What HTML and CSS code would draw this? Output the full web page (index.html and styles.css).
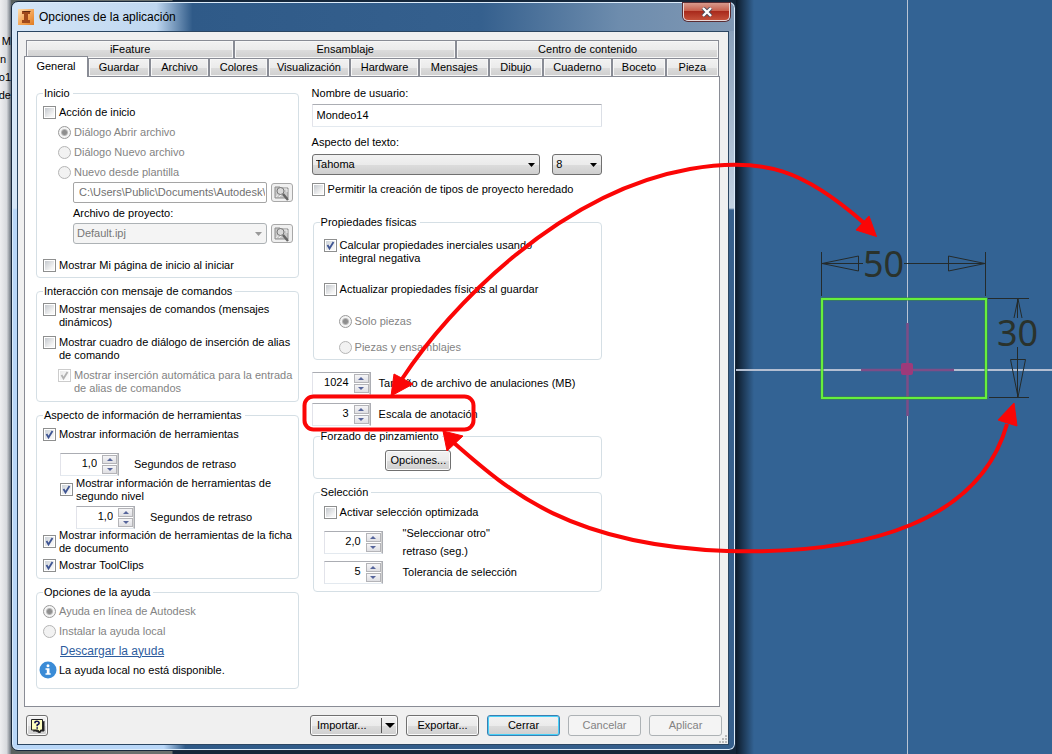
FILE: index.html
```html
<!DOCTYPE html>
<html lang="es">
<head>
<meta charset="utf-8">
<title>Opciones de la aplicación</title>
<link rel="stylesheet" href="styles.css">
</head>
<body>
<svg class="symbols" width="0" height="0" aria-hidden="true">
  <symbol id="browse" viewBox="0 0 16 16">
    <path d="M1 2h5l1 1h7v10H1z" fill="#c9c9c9" stroke="#8d8d8d"/>
    <path d="M2 12l5-6M5 12l4-4M9 4h4v3" stroke="#eee" fill="none"/>
    <circle cx="6.500" cy="6" r="3.500" fill="#d9d9d9" stroke="#777"/>
    <path d="M9 9l5 6" stroke="#666" stroke-width="2.500"/>
  </symbol>
</svg>
<div class="desktop">
  <aside class="behind"><span>M</span><span class="start">n</span><span>to1</span><span>de</span></aside>
  <main class="dialog">
    <header class="titlebar">
      <svg class="logo" viewBox="0 0 16 16" aria-hidden="true"><defs><linearGradient id="lg" x1="0" y1="0" x2="1" y2="1"><stop offset="0" stop-color="#ffe0b0"/><stop offset=".5" stop-color="#f5a95c"/><stop offset="1" stop-color="#e07c22"/></linearGradient></defs><rect width="16" height="16" fill="url(#lg)"/><path d="M4 2h8v3h-2v6h2v3H4v-3h2V5H4z" fill="#a04a1c"/><path d="M4 2h8l1 1H6z" fill="#5e2a12"/></svg>
      <h1>Opciones de la aplicación</h1>
      <button class="close" aria-label="Cerrar ventana"><svg viewBox="0 0 12 10"><path d="M2 1l8 8M10 1L2 9" stroke="#4b4b5a" stroke-width="4"/><path d="M2 1l8 8M10 1L2 9" stroke="#fff" stroke-width="2.400"/></svg></button>
    </header>
    <div class="client">
      <nav class="tabs top"><button class="t-a">iFeature</button><button class="t-b">Ensamblaje</button><button class="t-c">Centro de contenido</button></nav>
      <nav class="tabs low">
        <button class="active">General</button><button class="n1">Guardar</button><button class="n2">Archivo</button><button class="n2">Colores</button><button class="n3">Visualización</button><button class="n4">Hardware</button><button class="n4">Mensajes</button><button class="n5">Dibujo</button><button class="n4">Cuaderno</button><button class="n5">Boceto</button><button class="n5">Pieza</button>
      </nav>
      <section class="panel">
        <div class="col left">
          <fieldset class="g-start"><legend>Inicio</legend>
            <label class="row"><input type="checkbox">Acción de inicio</label>
            <label class="row in1 off"><input type="radio" name="s" checked disabled>Diálogo Abrir archivo</label>
            <label class="row in1 off"><input type="radio" name="s" disabled>Diálogo Nuevo archivo</label>
            <label class="row in1 off"><input type="radio" name="s" disabled>Nuevo desde plantilla</label>
            <div class="pick"><input type="text" class="path" aria-label="Plantilla" disabled value="C:\Users\Public\Documents\Autodesk\I"><button class="browse" aria-label="Buscar plantilla"><svg><use href="#browse"/></svg></button></div>
            <label class="row in2" for="proj">Archivo de proyecto:</label>
            <div class="pick"><select id="proj" disabled><option>Default.ipj</option></select><button class="browse" aria-label="Buscar proyecto"><svg><use href="#browse"/></svg></button></div>
            <label class="row home"><input type="checkbox">Mostrar Mi página de inicio al iniciar</label>
          </fieldset>
          <fieldset class="g-cmd"><legend>Interacción con mensaje de comandos</legend>
            <label class="two"><input type="checkbox"><span>Mostrar mensajes de comandos (mensajes<br>dinámicos)</span></label>
            <label class="two"><input type="checkbox"><span>Mostrar cuadro de diálogo de inserción de alias<br>de comando</span></label>
            <label class="two in1 off"><input type="checkbox" checked disabled><span>Mostrar inserción automática para la entrada<br>de alias de comandos</span></label>
          </fieldset>
          <fieldset class="g-tip"><legend>Aspecto de información de herramientas</legend>
            <label class="row"><input type="checkbox" checked>Mostrar información de herramientas</label>
            <div class="num n-a"><span class="spin"><input id="d1" type="text" value="1,0"><span class="arrows"><button aria-label="Más"></button><button class="dn" aria-label="Menos"></button></span></span><label for="d1">Segundos de retraso</label></div>
            <label class="two mid in3"><input type="checkbox" checked><span>Mostrar información de herramientas de<br>segundo nivel</span></label>
            <div class="num n-b"><span class="spin"><input id="d2" type="text" value="1,0"><span class="arrows"><button aria-label="Más"></button><button class="dn" aria-label="Menos"></button></span></span><label for="d2">Segundos de retraso</label></div>
            <label class="two mid"><input type="checkbox" checked><span>Mostrar información de herramientas de la ficha<br>de documento</span></label>
            <label class="row"><input type="checkbox" checked>Mostrar ToolClips</label>
          </fieldset>
          <fieldset class="g-help"><legend>Opciones de la ayuda</legend>
            <label class="row off"><input type="radio" name="h" checked disabled>Ayuda en línea de Autodesk</label>
            <label class="row off"><input type="radio" name="h" disabled>Instalar la ayuda local</label>
            <div class="row in3"><a href="#">Descargar la ayuda</a></div>
            <p class="info"><svg viewBox="0 0 18 18" aria-hidden="true"><circle cx="9" cy="9" r="8.500" fill="#3a8bd6"/><path d="M9 3.200a1.500 1.500 0 1 1 0 3 1.500 1.500 0 0 1 0-3M6.500 7.300h4v5h1.200v1.500H6.500v-1.500h1.300V8.800H6.500z" fill="#fff"/></svg>La ayuda local no está disponible.</p>
          </fieldset>
        </div>
        <div class="col right">
          <label class="row" for="user">Nombre de usuario:</label>
          <input id="user" class="user" type="text" value="Mondeo14">
          <label class="row look" for="font">Aspecto del texto:</label>
          <div class="fonts"><select id="font"><option>Tahoma</option></select><select class="size" aria-label="Tamaño"><option>8</option></select></div>
          <label class="row legacy"><input type="checkbox">Permitir la creación de tipos de proyecto heredado</label>
          <fieldset class="g-phys"><legend>Propiedades físicas</legend>
            <label class="two"><input type="checkbox" checked><span>Calcular propiedades inerciales usando<br>integral negativa</span></label>
            <label class="row upd"><input type="checkbox">Actualizar propiedades físicas al guardar</label>
            <label class="row in1 off solo"><input type="radio" name="p" checked disabled>Solo piezas</label>
            <label class="row in1 off both"><input type="radio" name="p" disabled>Piezas y ensamblajes</label>
          </fieldset>
          <div class="num n-c"><span class="spin"><input id="mb" type="text" value="1024"><span class="arrows"><button aria-label="Más"></button><button class="dn" aria-label="Menos"></button></span></span><label for="mb">Tamaño de archivo de anulaciones (MB)</label></div>
          <div class="num n-d"><span class="spin"><input id="sc" type="text" value="3"><span class="arrows"><button aria-label="Más"></button><button class="dn" aria-label="Menos"></button></span></span><label for="sc">Escala de anotación</label></div>
          <fieldset class="g-pin"><legend>Forzado de pinzamiento</legend><button class="btn opt">Opciones...</button></fieldset>
          <fieldset class="g-sel"><legend>Selección</legend>
            <label class="row"><input type="checkbox">Activar selección optimizada</label>
            <div class="num n-e tall"><span class="spin"><input id="so" type="text" value="2,0"><span class="arrows"><button aria-label="Más"></button><button class="dn" aria-label="Menos"></button></span></span><label for="so">"Seleccionar otro"<br>retraso (seg.)</label></div>
            <div class="num n-e"><span class="spin"><input id="tol" type="text" value="5"><span class="arrows"><button aria-label="Más"></button><button class="dn" aria-label="Menos"></button></span></span><label for="tol">Tolerancia de selección</label></div>
          </fieldset>
        </div>
      </section>
      <footer class="actions">
        <button class="btn help" aria-label="Ayuda"><svg viewBox="0 0 15 15"><path d="M3 13h3l4 2v-2h4V3" stroke="#222" fill="#222"/><path d="M1.500 1.500h11v10.500h-2v2l-3-2h-6z" fill="#ffffc0" stroke="#222"/><path d="M5 5.200V4.500Q5 3.200 7 3.200T9.200 5Q9.200 6 7.200 7V8.300M7.200 9.300v1.500" stroke="#101050" stroke-width="1.600" fill="none"/></svg></button>
        <button class="btn import"><span>Importar...</span><i></i></button>
        <button class="btn">Exportar...</button>
        <button class="btn primary">Cerrar</button>
        <button class="btn" disabled>Cancelar</button>
        <button class="btn" disabled>Aplicar</button>
        <svg class="grip" viewBox="0 0 8 8" aria-hidden="true"><path d="M6 0h2v2H6zM3 3h2v2H3zM6 3h2v2H6zM0 6h2v2H0zM3 6h2v2H3zM6 6h2v2H6z" fill="#bbb"/></svg>
      </footer>
    </div>
  </main>
  <section class="sketch" aria-label="Boceto">
    <svg viewBox="736 0 316 754" preserveAspectRatio="none">
      <path d="M907.500 0V754" stroke="#b9c4d4"/><path d="M736 370H1052" stroke="#b4bfd2" stroke-width="2"/>
      <path d="M907.500 323V416M861 370H954" stroke="#7d4d87" stroke-width="2.500"/>
      <rect x="822" y="299" width="164" height="99" fill="none" stroke="#3c8c3c" stroke-width="3"/>
      <rect x="822" y="299" width="164" height="99" fill="none" stroke="#66f03c" stroke-width="2"/>
      <rect x="901" y="363" width="12" height="12" rx="2" fill="#9e3a7a"/>
      <path d="M821.500 252V296M985.500 252V296M822 263.500H863M904 263.500H985M822 263.500L858.500 256V271ZM985 263.500L948.500 256V271ZM988 298.500H1029M989 397.500H1029M1017.500 299V318M1017.500 347V397M1018 299L1014 318M1018 299L1022 318M1018 397L1010.500 359.500H1025.500Z" fill="none" stroke="#242b2c"/>
      <text x="883.500" y="277">50</text><text x="1017.500" y="346">30</text>
    </svg>
  </section>
  <svg class="marks" viewBox="0 0 1052 754" preserveAspectRatio="none" aria-hidden="true">
    <rect x="304.500" y="396.500" width="169" height="33" rx="9"/>
    <path d="M402 379C450 306 560 192 690 169C765 156 805 171 864 223"/>
    <path d="M454 443C510 492 570 545 727 551C870 555 980 520 1007 424"/>
    <path class="tip" d="M391 396L394 374L413 384ZM876.500 236.500L856 230L869 216ZM443 431L463 436L447 451ZM1014 403L998 420L1017 426Z"/>
  </svg>
</div>
</body>
</html>
```
FILE: styles.css
```css
* { box-sizing: border-box; }
body { margin: 0; font: 11px/13px Tahoma, "Liberation Sans", sans-serif; color: #000; background: #336394; }
button, input, select { font: inherit; color: inherit; margin: 0; padding: 0; border-radius: 0; }
.symbols { position: absolute; }
.desktop { position: relative; display: grid; grid-template-columns: 11px minmax(0, 725fr) minmax(0, 316fr); min-height: 100vh; padding: 1px 0 3px; background: linear-gradient(90deg, #58605e 0, #6a706e 120px, #6a706e 172px, #14263a 173px, #14263a 738px, #336394 750px); }
.behind { background: linear-gradient(90deg, #eeeef0, #d8dade 60%, #6b737c); display: flex; flex-direction: column; align-items: flex-end; gap: 5px; padding-top: 35px; margin: -1px 0 -3px; overflow: hidden; white-space: nowrap; }
.start { align-self: flex-start; }
.dialog { display: flex; flex-direction: column; border: 1px solid #17283c; border-radius: 7px; box-shadow: inset 0 0 0 1px #dcecfb; padding: 1px 6px 5px 5px; z-index: 1; background: linear-gradient(#d5e6f7, #d5e6f7 206px, transparent 208px) left / 6px 100% no-repeat, linear-gradient(#8098b4, #c3d2e2 206px, transparent 208px) right / 6px 100% no-repeat, linear-gradient(90deg, #b9d7f8 0, #b9d7f8 21%, #2f5a88 24%, #365f8c 100%); }
.titlebar { display: flex; align-items: center; height: 28px; margin: 0 -5px; padding: 0 4px 0 5px; gap: 5px; border-radius: 6px 6px 0 0; background: linear-gradient(90deg, #d5e6f7 0, #bfd7f0 20%, #2f5a88 25%, #35608e 65%, #6d8cad 84%, #8098b4 100%); }
.logo { width: 16px; height: 16px; margin-left: 1px; }
h1 { font-size: 12px; line-height: 16px; font-weight: 400; margin: 0; flex: 1; }
.close { align-self: flex-start; width: 47px; height: 18px; border: 1px solid #e9d6d6; border-top: 0; border-radius: 0 0 5px 5px; background: linear-gradient(#d99a8c, #c75d4a 48%, #a92a1c 50%, #c4503a); display: grid; place-items: center; box-shadow: 0 0 0 1px #5b2d33; }
.close svg { width: 12px; height: 10px; }
.client { flex: 1; display: flex; flex-direction: column; background: #f0f0f0; border: 1px solid #2b4662; padding: 8px 8px 8px 6px; }
.tabs { display: flex; margin: 0 1px 0 2px; }
.tabs button { border: 1px solid #898c95; height: 18px; background: linear-gradient(#f2f2f2, #ebebeb 50%, #dcdcdc 52%, #cfcfcf); box-shadow: inset 0 0 0 1px #f7f7f7; }
.top button { border-bottom: 0; }
.low button { height: 19px; }
.low .active { background: #fff; border-bottom: 0; height: 21px; margin: -2px 0 -1px -2px; z-index: 1; flex: 64 1 0; padding-bottom: 2px; box-shadow: none; }
.t-a { flex: 208 1 0; } .t-b { flex: 222 1 0; } .t-c { flex: 263 1 0; }
.n1 { flex: 62 1 0; } .n2 { flex: 59 1 0; } .n3 { flex: 82 1 0; } .n4 { flex: 70 1 0; } .n5 { flex: 53 1 0; }
.panel { flex: 1; display: grid; grid-template-columns: minmax(0, 263fr) minmax(0, 291fr) minmax(0, 104fr); gap: 0 13px; align-items: start; background: #fff; border: 1px solid #898c95; padding: 10px 0 15px 11px; margin-top: -1px; }
.col { display: flex; flex-direction: column; min-width: 0; }
.left { gap: 7px; }
.right { margin-top: -4px; }
fieldset { margin: 0; min-width: 0; border: 1px solid #d5dfe5; border-radius: 4px; padding: 2px 0 2px 6px; }
legend { padding: 0 3px 0 1px; height: 13px; }
.row { display: flex; align-items: center; gap: 3px; height: 20px; white-space: nowrap; }
.in1 { padding-left: 15px; }
.in2 { padding-left: 30px; }
.in3 { padding-left: 17px; }
.off { color: #838383; }
input[type=checkbox], input[type=radio] { appearance: none; flex: none; width: 13px; height: 13px; border: 1px solid #8e8f8f; background: linear-gradient(135deg, #c5c9ce, #f6f6f6 80%) content-box, #fff; padding: 1px; }
input[type=radio] { border-radius: 50%; border-color: #b5b5b5; background: #f2f2f2; }
input[type=radio]:checked { border-color: #9a9a9a; background: radial-gradient(circle, #8e8e8e 0 2px, #b8b8b8 3px, #f4f4f4 4px); }
input[type=checkbox]:checked { background: url("data:image/svg+xml,%3Csvg xmlns='http://www.w3.org/2000/svg' viewBox='0 0 11 11'%3E%3Cpath d='M2.500 5l2 3.500L8.500 2' fill='none' stroke='%233f5593' stroke-width='1.800'/%3E%3C/svg%3E") center / 11px 11px, linear-gradient(135deg, #ccd2d8, #f6f6f6 80%) content-box, #fff; }
input[type=checkbox]:disabled { opacity: .45; filter: grayscale(1); }
.pick { display: flex; gap: 4px; padding: 0 5px 0 30px; height: 21px; }
.path { flex: 1; min-width: 0; border: 1px solid #a5a5a5; border-radius: 2px; padding: 0 1px 1px 5px; color: #707070; background: #fff; }
select { appearance: none; flex: 1; min-width: 0; height: 21px; border: 1px solid #707070; border-radius: 3px; padding: 0 16px 1px 3px; background: url("data:image/svg+xml,%3Csvg xmlns='http://www.w3.org/2000/svg' viewBox='0 0 7 4'%3E%3Cpath d='M0 0h7L3.500 4z'/%3E%3C/svg%3E") right 4px center / 7px 4px no-repeat, linear-gradient(#f2f2f2, #ebebeb 50%, #dcdcdc 52%, #cfcfcf); }
select:disabled { border-color: #adb2b5; color: #777; opacity: 1; background: url("data:image/svg+xml,%3Csvg xmlns='http://www.w3.org/2000/svg' viewBox='0 0 7 4'%3E%3Cpath d='M0 0h7L3.500 4z' fill='%23999'/%3E%3C/svg%3E") right 4px center / 7px 4px no-repeat, #f4f4f4; }
.browse { width: 22px; height: 19px; margin-top: 1px; border: 1px solid #a8a8a8; border-radius: 3px; background: #f0f0f0; display: grid; place-items: center; }
.browse svg { width: 16px; height: 16px; }
.home { margin-top: 11px; }
.g-cmd { display: flex; flex-direction: column; gap: 7px; padding: 5px 0 6px 6px; }
.two { display: flex; gap: 3px; height: 26px; white-space: nowrap; }
.mid input { margin-top: 6px; }
.num { display: flex; gap: 8px; align-items: center; height: 24px; }
.n-a, .n-b { gap: 15px; }
.n-a { margin: 8px 0 1px 17px; }
.n-b { margin: 2px 0 0 33px; }
.g-tip { padding-bottom: 3px; }
.spin { flex: none; display: flex; width: 59px; height: 23px; border: 1px solid; border-color: #abadb3 #abadb3 #e3e9ef #e2e3ea; background: #fff; }
.spin input { flex: 1; min-width: 0; border: 0; text-align: right; background: none; padding: 0 4px 2px 0; }
.arrows { display: flex; flex-direction: column; width: 17px; padding: 1px; background: #fff; box-shadow: inset -1px 0 #d0d0d0; gap: 1px; }
.arrows button { flex: 1; border: 1px solid #b4b4b8; background: linear-gradient(#f5f5f7, #dfdfe3); display: grid; place-items: center; }
.arrows button::before { content: ""; border: 3px solid transparent; border-top: 0; border-bottom-color: #56659b; }
.arrows .dn::before { border: 3px solid transparent; border-bottom: 0; border-top-color: #56659b; }
a { color: #2d5c9e; font-size: 12px; }
.info { display: flex; gap: 2px; align-items: center; margin: 0 0 7px -4px; height: 18px; }
.info svg { width: 18px; height: 18px; }
.user { height: 23px; margin-top: 1px; border: 1px solid; border-color: #abadb3 #dbdfe6 #e3e9ef #e2e3ea; padding: 0 4px 2px; border-radius: 1px; }
.look { margin-top: 5px; }
.fonts { display: flex; gap: 12px; margin-top: 2px; }
.fonts .size { flex: 0 0 50px; }
.legacy { margin-top: 4px; }
.right fieldset { margin-left: 1px; }
.g-phys { margin-top: 17px; padding: 10px 0 2px 10px; }
.g-phys legend, .g-sel legend { margin-left: -4px; }
.upd { margin-top: 14px; }
.solo { margin-top: 12px; }
.both { margin-top: 6px; }
.n-c { margin-top: 11px; }
.n-d { margin: 7px 0 4px; }
.g-pin { display: flex; justify-content: center; padding: 7px 84px 7px 6px; }
.g-pin .opt { flex: none; width: 66px; }
.g-sel { margin-top: 7px; padding: 3px 0 7px 10px; }
.n-e { gap: 20px; }
.tall { height: 36px; margin-top: 2px; line-height: 18px; }
.btn { height: 21px; border: 1px solid #707070; border-radius: 3px; background: linear-gradient(#f2f2f2, #ebebeb 50%, #dcdcdc 52%, #cfcfcf); box-shadow: inset 0 0 0 1px #fbfbfb; padding: 0; }
.actions { display: grid; grid-template-columns: 22px minmax(0, 1fr) 88px repeat(4, 73px); gap: 8px; padding: 8px 0 0 2px; position: relative; margin-right: -2px; }
.import { grid-column: 3; display: flex; align-items: center; justify-content: space-between; padding-left: 6px; }
.import i { width: 16px; height: 15px; border-left: 1px solid #555; display: grid; place-items: center; }
.import i::before { content: ""; border: 5px solid transparent; border-top-color: #000; border-bottom: 0; }
.help { display: grid; place-items: center; }
.help svg { width: 15px; height: 15px; }
.primary { border-color: #3c7fb1; box-shadow: inset 0 0 0 1px #46d0f8; }
.btn:disabled { border-color: #adb2b5; color: #838383; background: #f4f4f4; box-shadow: none; }
.grip { position: absolute; right: -5px; bottom: -7px; width: 8px; height: 8px; }
.sketch { position: relative; margin: -1px 0 -3px; background: linear-gradient(90deg, #0d1b2b, #336394 18px); }
.sketch svg { position: absolute; inset: 0; width: 100%; height: 100%; }
.sketch text { font: 36px "Noto Sans", sans-serif; fill: #2a322c; text-anchor: middle; }
.marks { position: absolute; inset: 0; width: 100%; height: 100%; z-index: 2; pointer-events: none; fill: none; stroke: #fb0606; stroke-width: 4; }
.marks .tip { fill: #fb0606; stroke-width: 1; }
```
